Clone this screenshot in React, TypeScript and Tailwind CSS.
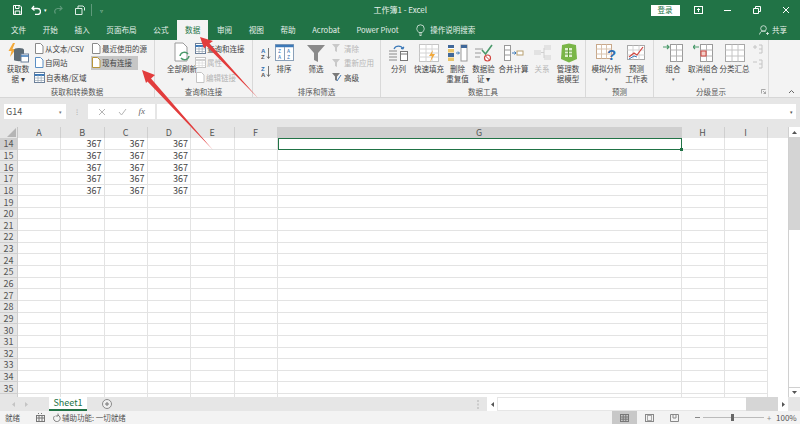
import type { ReactNode } from 'react';

const FONT = { fontFamily: '"Noto Sans CJK SC", "Liberation Sans", sans-serif' };

const COLUMNS = ['A', 'B', 'C', 'D', 'E', 'F', 'G', 'H', 'I'];
const TABS = ['文件', '开始', '插入', '页面布局', '公式', '数据', '审阅', '视图', '帮助', 'Acrobat', 'Power Pivot'];
const ROWS = Array.from({ length: 23 }, (_, i) => i + 14);
const LAST_ROW = 35;
const COL_TEMPLATE = 'grid-cols-[18px_43px_43.5px_43px_43.5px_43.5px_43px_404px_43px_43px_1fr]';

function Icon({ w = 20, h = 20, children }: { w?: number; h?: number; children: ReactNode }) {
  return (
    <svg width={w} height={h} viewBox={`0 0 ${w} ${h}`} fill="none" className="shrink-0">
      {children}
    </svg>
  );
}

function PageIcon({ stroke = '#8a8a8a' }: { stroke?: string }) {
  return (
    <Icon w={10} h={11}>
      <path d="M1.5.5h5l2.500 2.500v7.500h-7.500z" fill="#fff" stroke={stroke} />
    </Icon>
  );
}

function TableIcon({ muted }: { muted?: boolean }) {
  return (
    <Icon w={11} h={11}>
      <rect x=".5" y=".5" width="10" height="10" fill="#fff" stroke={muted ? '#c4c4c4' : '#6b7f99'} />
      <path d="M.5 3h10" stroke={muted ? '#d0d0d0' : '#3c79b8'} strokeWidth="2" />
      <path d="M.5 6h10M.5 8.500h10M4 3v7.500M7.200 3v7.500" stroke={muted ? '#dadada' : '#9aa7b5'} strokeWidth=".7" />
    </Icon>
  );
}

function Funnel({ fill }: { fill: string }) {
  return (
    <Icon w={12} h={10}>
      <path d="M1 1h8L6 4.500V9L4 8V4.500z" fill={fill} />
    </Icon>
  );
}

function SortIcon({ top, bottom }: { top: string; bottom: string }) {
  return (
    <Icon w={10} h={13}>
      <text x="0" y="5.500" fontSize="6" fontWeight="700" fill="#2f6fb0" fontFamily="Liberation Sans">{top}</text>
      <text x="0" y="12" fontSize="6" fontWeight="700" fill="#555" fontFamily="Liberation Sans">{bottom}</text>
      <path d="M7.500 1v10M6 9.500l1.500 2 1.500-2" stroke="#555" strokeWidth=".8" />
    </Icon>
  );
}

function SmallRow({ icon, label, disabled, active, className = '' }: { icon: ReactNode; label: string; disabled?: boolean; active?: boolean; className?: string }) {
  return (
    <div className={`flex h-[14.5px] items-center gap-[1px] whitespace-nowrap ${disabled ? 'text-[#b5b5b5]' : 'text-[#444]'} ${active ? 'bg-[#c6c6c6]' : ''} ${className}`}>
      {icon}
      <span>{label}</span>
    </div>
  );
}

function BigButton({ icon, lines, width, chevron }: { icon: ReactNode; lines: string[]; width: string; chevron?: boolean }) {
  return (
    <div className={`flex shrink-0 flex-col items-center text-[#444] ${width}`}>
      <div className="flex h-[23px] items-center justify-center">{icon}</div>
      {lines.map((line) => (
        <div key={line} className="h-[10px] whitespace-nowrap text-center leading-[10px]">
          {line}
        </div>
      ))}
      {chevron && <div className="h-[10px] text-[5px] leading-[10px] text-[#666]">▾</div>}
    </div>
  );
}

function Group({ label, width, children }: { label: string; width: string; children: ReactNode }) {
  return (
    <div className={`relative flex h-full shrink-0 flex-col border-r border-[#d9d9d9] ${width}`}>
      <div className="flex h-[47px] overflow-hidden pt-[1px]">{children}</div>
      <div className="text-center leading-[10px] text-[#555]">{label}</div>
    </div>
  );
}

function TitleBar() {
  return (
    <div className="flex h-[20px] items-center bg-[#217346] text-white">
      <div className="flex w-[112px] items-center pl-[13px]">
        <Icon w={9} h={10}>
          <path d="M.5.500h6.500l1.500 1.500v7.500h-8z" stroke="#fff" />
          <path d="M2.500 1v2.500h3.500V1M2.200 9.500V6h4.600v3.500" stroke="#fff" />
        </Icon>
        <span className="ml-[9px]">
          <Icon w={10} h={10}>
            <path d="M3 1 1 3.500 3.500 5.500M1.500 3.500h5a3 3 0 0 1 0 6H4" stroke="#fff" strokeWidth="1.300" />
          </Icon>
        </span>
        <span className="ml-[3px] text-[5px]">▾</span>
        <span className="ml-[7px]">
          <Icon w={9} h={10}>
            <path d="M6 1l2 2.500L5.500 5.500M7.500 3.500h-4a3 3 0 0 0-2 5" stroke="#5f9a7b" strokeWidth="1.200" />
          </Icon>
        </span>
        <span className="ml-[12px]">
          <Icon w={10} h={10}>
            <path d="M.5 3.500h6.500v6H.5zM3 3.500V1h5l1.500 1.500v3" stroke="#dfeee6" />
          </Icon>
        </span>
        <span className="ml-[6px] h-[12px] w-px bg-[#5f9a7b]" />
        <span className="ml-[8px] text-[6px] text-[#a8cbb8]">▿</span>
      </div>
      <div className="flex-1 pl-[38px] text-center text-[8px] text-[#e8f1ec]">工作簿1 - Excel</div>
      <div className="flex h-[11px] w-[29px] items-center justify-center bg-white text-[7.500px] text-[#217346]">登录</div>
      <div className="ml-[4.500px] flex w-[29px] justify-center">
        <Icon w={9} h={8}>
          <rect x=".5" y=".5" width="8" height="7" stroke="#fff" />
          <path d="M4.500 6V2.500M3 4l1.500-1.500L6 4" stroke="#fff" />
        </Icon>
      </div>
      <div className="flex w-[29px] justify-center">
        <span className="h-px w-[7px] bg-white" />
      </div>
      <div className="flex w-[29px] justify-center">
        <Icon w={8} h={8}>
          <path d="M.5 2.500h5v5h-5zM2.500 2.500v-2h5v5h-2" stroke="#fff" />
        </Icon>
      </div>
      <div className="flex w-[29px] justify-center">
        <Icon w={8} h={8}>
          <path d="m1 1 6 6M7 1 1 7" stroke="#fff" />
        </Icon>
      </div>
    </div>
  );
}

function TabBar() {
  return (
    <div className="flex h-[20px] items-end bg-[#217346] pl-[3px] text-[7.5px] text-[#e6f0ea]">
      {TABS.map((tab) => (
        <div
          key={tab}
          className={`mr-[0.6px] flex h-[20px] items-center px-2 text-[7.6px] ${tab === '数据' ? 'bg-[#f3f3f3] text-[#217346]' : ''}`}
        >
          {tab}
        </div>
      ))}
      <div className="ml-[9px] flex h-[20px] items-center gap-[5px]">
        <Icon w={9} h={12}>
          <path d="M2.800 8.500C1.500 7 .8 6 .8 4.500a3.700 3.700 0 0 1 7.400 0C8.200 6 7.500 7 6.200 8.500zM3 10h3M3.500 11.500h2" stroke="#e6f0ea" strokeWidth=".8" />
        </Icon>
        <span>操作说明搜索</span>
      </div>
      <div className="ml-auto mr-[13px] flex h-[20px] items-center gap-[3px]">
        <Icon w={10} h={10}>
          <circle cx="4.500" cy="3.500" r="2.800" stroke="#e6f0ea" strokeWidth=".8" />
          <path d="M.5 9.500a4 4 0 0 1 6-3M7 8.500h3M8.500 7v3" stroke="#e6f0ea" strokeWidth=".8" />
        </Icon>
        <span>共享</span>
      </div>
    </div>
  );
}

function Ribbon() {
  return (
    <div className="flex h-[58px] border-b border-[#d6d6d6] bg-[#f3f3f3] text-[7.5px]">
      <Group label="获取和转换数据" width="w-[155px]">
        <BigButton
          width="w-[32px] ml-[2px]"
          lines={['获取数', '据 ▾']}
          icon={
            <Icon w={22} h={22}>
              <path d="M6 1 1.500 9h3L3 15l6-8H5.500L8 1z" fill="#f2a93b" />
              <ellipse cx="12" cy="8" rx="5" ry="2" fill="#5d6b75" />
              <path d="M7 8v10c0 1.500 10 1.500 10 0V8z" fill="#5d6b75" />
              <rect x="14" y="12" width="7.500" height="8" fill="#fff" stroke="#6b7f99" />
              <path d="M14 14h7.500" stroke="#3c79b8" strokeWidth="1.500" />
            </Icon>
          }
        />
        <div className="flex w-[57px] shrink-0 flex-col">
          <SmallRow icon={<PageIcon />} label="从文本/CSV" />
          <SmallRow icon={<PageIcon stroke="#5b8fc4" />} label="自网站" />
          <SmallRow icon={<TableIcon />} label="自表格/区域" />
        </div>
        <div className="flex w-[60px] shrink-0 flex-col">
          <SmallRow icon={<PageIcon />} label="最近使用的源" />
          <SmallRow icon={<PageIcon stroke="#b8963a" />} label="现有连接" active className="w-[47px]" />
        </div>
      </Group>

      <Group label="查询和连接" width="w-[98px]">
        <BigButton
          width="w-[30px] ml-[12px]"
          lines={['全部刷新']}
          chevron
          icon={
            <Icon w={20} h={22}>
              <path d="M3 1h8l4 4v14H3z" fill="#fff" stroke="#9a9a9a" />
              <path d="M8 14a4.500 4.500 0 0 1 8-2M17 14a4.500 4.500 0 0 1-8 2" stroke="#4b9a6b" strokeWidth="1.500" />
            </Icon>
          }
        />
        <div className="ml-[-2px] flex w-[50px] shrink-0 flex-col">
          <SmallRow icon={<TableIcon />} label="查询和连接" />
          <SmallRow icon={<TableIcon muted />} label="属性" disabled />
          <SmallRow icon={<PageIcon stroke="#c4c4c4" />} label="编辑链接" disabled />
        </div>
      </Group>

      <Group label="排序和筛选" width="w-[128px]">
        <div className="ml-[8px] flex w-[12px] shrink-0 flex-col gap-[5px] pt-[6px]">
          <SortIcon top="A" bottom="Z" />
          <SortIcon top="Z" bottom="A" />
        </div>
        <BigButton
          width="w-[22px]"
          lines={['排序']}
          icon={
            <Icon w={19} h={17}>
              <rect x=".5" y=".5" width="18" height="16" fill="#fff" stroke="#8aa0b8" />
              <path d="M.5 2h18" stroke="#3c79b8" strokeWidth="2.500" />
              <path d="M9.500 3v13" stroke="#8aa0b8" />
              <text x="3" y="9" fontSize="5" fill="#2f6fb0">Z</text>
              <text x="12" y="9" fontSize="5" fill="#2f6fb0">A</text>
              <text x="3" y="15" fontSize="5" fill="#2f6fb0">A</text>
              <text x="12" y="15" fontSize="5" fill="#2f6fb0">Z</text>
            </Icon>
          }
        />
        <BigButton
          width="w-[30px] ml-[6px]"
          lines={['筛选']}
          icon={
            <Icon w={20} h={20}>
              <path d="M1 2h18l-7 8v9l-4-2v-7z" fill="#8a8a8a" />
            </Icon>
          }
        />
        <div className="flex w-[45px] shrink-0 flex-col">
          <SmallRow disabled label="清除" icon={<Funnel fill="#c9c9c9" />} />
          <SmallRow disabled label="重新应用" icon={<Funnel fill="#c9c9c9" />} />
          <SmallRow label="高级" icon={<Icon w={12} h={10}><path d="M1 1h8L6 4.500V9L4 8V4.500z" fill="#7a7a7a" /><path d="m6 9 4-6" stroke="#3c79b8" /></Icon>} />
        </div>
      </Group>

      <Group label="数据工具" width="w-[205px]">
        <BigButton
          width="w-[29px] ml-[3px]"
          lines={['分列']}
          icon={
            <Icon w={21} h={20}>
              <path d="M1 8h8M1 11h8M1 14h8M1 17h8" stroke="#8a8a8a" />
              <rect x="12.500" y="8.500" width="7" height="9" fill="#fff" stroke="#777" />
              <path d="M12.500 11h7" stroke="#777" />
              <path d="M6 6a5 5 0 0 1 9 0M15 6l-2-.5M15 6l.8-2.200" stroke="#3c79b8" strokeWidth="1.200" />
            </Icon>
          }
        />
        <BigButton
          width="w-[32px]"
          lines={['快速填充']}
          icon={
            <Icon w={20} h={20}>
              <rect x=".5" y="1.500" width="19" height="17" fill="#fff" stroke="#c4c4c4" />
              <path d="M.5 6h19M.5 10h19M.5 14h19M7 1.500v17M13 1.500v17" stroke="#d4d4d4" />
              <path d="M14 7l-4 6h3l-2 6 5-8h-3z" fill="#f2a93b" />
            </Icon>
          }
        />
        <BigButton
          width="w-[25px]"
          lines={['删除', '重复值']}
          icon={
            <Icon w={21} h={18}>
              <rect x="1" y="1" width="6" height="16" fill="#e9c46a" />
              <path d="M1 4.500h6M1 9h6M1 13h6" stroke="#fff" />
              <rect x="1" y="1" width="6" height="3" fill="#40689a" />
              <rect x="1" y="9" width="6" height="4" fill="#40689a" />
              <rect x="14" y="1" width="6" height="16" fill="#fff" stroke="#999" />
              <rect x="14" y="1" width="6" height="3" fill="#40689a" />
              <path d="M9 9h3M11 7.500 12.500 9 11 10.500" stroke="#3c79b8" />
            </Icon>
          }
        />
        <BigButton
          width="w-[27px]"
          lines={['数据验', '证 ▾']}
          icon={
            <Icon w={20} h={20}>
              <path d="M1 6h8M1 10h6M1 14h5" stroke="#9a9a9a" />
              <path d="m8 7 3.500 4L18 2" stroke="#4b9a6b" strokeWidth="1.600" />
              <circle cx="13.500" cy="15" r="3" fill="#fff" stroke="#d0453f" strokeWidth="1.200" />
              <path d="m11.500 13 4 4" stroke="#d0453f" />
            </Icon>
          }
        />
        <BigButton
          width="w-[33px]"
          lines={['合并计算']}
          icon={
            <Icon w={21} h={18}>
              <rect x="1.500" y="1.500" width="6" height="15" fill="#fff" stroke="#999" />
              <path d="M1.500 6h6M1.500 11h6" stroke="#999" />
              <rect x="14" y="7" width="6" height="4" fill="#fff" stroke="#b8a070" />
              <path d="M9 9h4M11.500 7.500 13 9l-1.500 1.500" stroke="#3c79b8" />
            </Icon>
          }
        />
        <div className="w-[24px] shrink-0 text-[#b5b5b5]">
          <div className="flex h-[23px] items-center justify-center">
            <Icon w={19} h={18}>
              <rect x="1" y="6" width="7" height="5" fill="#e2e2e2" />
              <rect x="11" y="1" width="7" height="5" fill="#e2e2e2" />
              <rect x="11" y="11" width="7" height="5" fill="#e2e2e2" />
              <path d="M8 8.500h3M11 4v10" stroke="#cfcfcf" />
            </Icon>
          </div>
          <div className="h-[10px] text-center leading-[10px]">关系</div>
        </div>
        <BigButton
          width="w-[28px]"
          lines={['管理数', '据模型']}
          icon={
            <Icon w={19} h={20}>
              <path d="M3 2 10 .5 17 2l1 14-8 3.500L2 16z" fill="#7ab648" />
              <rect x="6" y="5" width="7" height="9" fill="#dff0cf" />
              <path d="M6 8h7M6 11h7M9.500 5v9" stroke="#5d9a32" />
            </Icon>
          }
        />
      </Group>

      <Group label="预测" width="w-[68px]">
        <BigButton
          width="w-[33px] ml-[4px]"
          lines={['模拟分析']}
          chevron
          icon={
            <Icon w={21} h={19}>
              <rect x=".5" y="1.500" width="15" height="14" fill="#fff" stroke="#c8a88a" />
              <path d="M.5 6h15M.5 11h15M5.500 1.500v14M10.500 1.500v14" stroke="#d9c3ae" />
              <text x="11" y="17" fontSize="15" fontWeight="700" fill="#2f6fb0" fontFamily="Liberation Sans">?</text>
            </Icon>
          }
        />
        <BigButton
          width="w-[27px]"
          lines={['预测', '工作表']}
          icon={
            <Icon w={19} h={18}>
              <rect x=".5" y="1.500" width="17" height="14" fill="#fff" stroke="#a8a8a8" />
              <path d="M.5 6h17M.5 11h17M6 1.500v14M12 1.500v14" stroke="#d4d4d4" />
              <path d="m2 13 5-4 3 2 6-8" stroke="#d0453f" strokeWidth="1.200" />
              <path d="m2 15 5-3 3 1" stroke="#3c79b8" />
            </Icon>
          }
        />
      </Group>

      <Group label="分级显示" width="w-[115px]">
        <BigButton
          width="w-[30px] ml-[4px]"
          lines={['组合']}
          chevron
          icon={
            <Icon w={20} h={18}>
              <rect x="7.500" y=".5" width="12" height="17" fill="#fff" stroke="#9a9a9a" />
              <path d="M7.500 6h12M7.500 12h12M13.500.5v17" stroke="#b5b5b5" />
              <path d="M0 3h6M4 1l2 2-2 2" stroke="#4b9a6b" strokeWidth="1.200" />
            </Icon>
          }
        />
        <BigButton
          width="w-[30px]"
          lines={['取消组合']}
          chevron
          icon={
            <Icon w={20} h={18}>
              <rect x="7.500" y=".5" width="12" height="17" fill="#fff" stroke="#9a9a9a" />
              <path d="M7.500 6h12M7.500 12h12M13.500.5v17" stroke="#b5b5b5" />
              <path d="M6 3H0M2 1 0 3l2 2" stroke="#4b9a6b" strokeWidth="1.200" />
              <rect x="8" y="7" width="5" height="5" fill="#f3d0c8" stroke="#d0453f" />
            </Icon>
          }
        />
        <BigButton
          width="w-[33px]"
          lines={['分类汇总']}
          icon={
            <Icon w={20} h={18}>
              <rect x=".5" y=".5" width="19" height="17" fill="#fff" stroke="#a8a8a8" />
              <path d="M.5 6h19M.5 12h19M7 .5v17M13 .5v17" stroke="#c4c4c4" />
            </Icon>
          }
        />
        <div className="ml-[2px] flex w-[12px] shrink-0 flex-col gap-[5px] pt-[3px]">
          <Icon w={10} h={10}>
            <path d="M0 3h4M2 1v4M6 1h3v8H6M6 5h3" stroke="#c4c4c4" />
          </Icon>
          <Icon w={10} h={10}>
            <path d="M0 3h4M6 1h3v8H6M6 5h3" stroke="#c4c4c4" />
          </Icon>
        </div>
        <div className="absolute bottom-[3px] right-[2px]">
          <Icon w={5} h={5}>
            <path d="M.5 4.500v-4h4M2 2l2.500 2.500M4.500 2.500v2h-2" stroke="#888" strokeWidth=".7" />
          </Icon>
        </div>
      </Group>

      <div className="flex flex-1 items-end justify-end pb-[3px] pr-[5px]">
        <Icon w={7} h={5}>
          <path d="m1 4 2.500-2.500L6 4" stroke="#666" />
        </Icon>
      </div>
    </div>
  );
}

function FormulaBar() {
  return (
    <div className="flex h-[29px] items-start gap-[2px] bg-[#e6e6e6] pl-[4px] pt-[6px] text-[#555]">
      <div className="flex h-[15px] w-[62px] items-center justify-between bg-white px-[2px] text-[9px]">
        <span>G14</span>
        <span className="pr-[2px] text-[5px] text-[#777]">▾</span>
      </div>
      <div className="flex h-[15px] w-[18px] items-center justify-center text-[8px] text-[#aaa]">⁝</div>
      <div className="flex h-[15px] w-[67px] items-center justify-around bg-white px-[4px]">
        <Icon w={8} h={8}>
          <path d="m1 1 6 6M7 1 1 7" stroke="#b5b5b5" />
        </Icon>
        <Icon w={9} h={8}>
          <path d="m1 4 2.500 3L8 1" stroke="#b5b5b5" />
        </Icon>
        <span className="font-['Liberation_Serif',serif] text-[9px] italic text-[#666]">fx</span>
      </div>
      <div className="flex h-[15px] flex-1 items-center justify-end bg-white pr-[3px]">
        <span className="text-[5px] text-[#555]">▾</span>
      </div>
      <div className="w-[2px]" />
    </div>
  );
}

function SheetGrid() {
  return (
    <div className="min-w-0 flex-1 overflow-hidden bg-white text-[9px]">
      <div className={`grid h-[11px] ${COL_TEMPLATE} bg-[#e6e6e6] text-[#555]`}>
        <div className="flex items-end justify-end border-r border-[#c6c6c6] pb-[1px] pr-[1px]">
          <div className="h-0 w-0 border-b-[9px] border-l-[9px] border-b-[#b5b5b5] border-l-transparent" />
        </div>
        {COLUMNS.map((col) => (
          <div
            key={col}
            className={`flex items-center justify-center border-r border-[#cfcfcf] leading-none ${col === 'G' ? 'bg-[#cfcfcf]' : ''}`}
          >
            {col}
          </div>
        ))}
        <div className="bg-[#e6e6e6]" />
      </div>
      {ROWS.map((row) => (
        <div key={row} className={`grid h-[11.65px] ${COL_TEMPLATE} text-[#444]`}>
          <div
            className={`flex items-center justify-center border-b border-r border-[#cfcfcf] pt-px leading-none text-[#555] ${row === 14 ? 'bg-[#cfcfcf]' : 'bg-[#e6e6e6]'}`}
          >
            {row <= LAST_ROW && row}
          </div>
          {COLUMNS.map((col) => {
            const selected = row === 14 && col === 'G';
            const hasValue = row <= 18 && (col === 'B' || col === 'C' || col === 'D');
            return (
              <div
                key={col}
                className={
                  selected
                    ? 'relative border border-[#217346]'
                    : 'flex items-center justify-end border-b border-r border-[#e3e3e3] pr-[2px] pt-px leading-none'
                }
              >
                {hasValue && '367'}
                {selected && <div className="absolute bottom-[-2px] right-[-2px] h-[3px] w-[3px] bg-[#217346]" />}
              </div>
            );
          })}
          <div />
        </div>
      ))}
    </div>
  );
}

function VerticalScroll() {
  return (
    <div className="flex w-[12px] shrink-0 flex-col border-l border-[#d0d0d0] bg-[#e6e6e6]">
      <div className="flex h-[10px] items-center justify-center bg-white text-[5px] text-[#555]">
        <Icon w={5} h={3}>
          <path d="M0 3 2.500 0 5 3z" fill="#555" />
        </Icon>
      </div>
      <div className="h-[93px] bg-[#d4d4d4]" />
      <div className="flex-1 bg-white" />
      <div className="flex h-[10px] items-center justify-center border-t border-[#d0d0d0] bg-white">
        <Icon w={5} h={3}>
          <path d="M0 0h5L2.500 3z" fill="#555" />
        </Icon>
      </div>
    </div>
  );
}

function Triangle({ dir, fill }: { dir: 'left' | 'right'; fill: string }) {
  return (
    <Icon w={3} h={5}>
      <path d={dir === 'left' ? 'M3 0v5L0 2.500z' : 'M0 0v5l3-2.500z'} fill={fill} />
    </Icon>
  );
}

function SheetTabs() {
  return (
    <div className="flex h-[14px] items-stretch bg-[#e6e6e6] text-[9px]">
      <div className="flex w-[49px] items-center gap-[10px] pl-[12px]">
        <Triangle dir="left" fill="#c4c4c4" />
        <Triangle dir="right" fill="#c4c4c4" />
      </div>
      <div className="flex w-[38px] items-center justify-center border-b-2 border-[#217346] bg-white text-[#217346]">Sheet1</div>
      <div className="ml-[15px] flex items-center">
        <Icon w={10} h={10}>
          <circle cx="5" cy="5" r="4.500" stroke="#8a8a8a" fill="#efefef" />
          <path d="M3 5h4M5 3v4" stroke="#777" />
        </Icon>
      </div>
      <div className="flex flex-1 items-center justify-end pr-[8px]">
        <Icon w={2} h={9}>
          <path d="M1 0v2M1 3.500v2M1 7v2" stroke="#b0b0b0" />
        </Icon>
      </div>
      <div className="flex w-[10px] items-center justify-center bg-white">
        <Triangle dir="left" fill="#555" />
      </div>
      <div className="my-[1px] ml-px w-[248px] bg-white" />
      <div className="w-[32px] bg-[#d6d6d6]" />
      <div className="flex w-[10px] items-center justify-center bg-white">
        <Triangle dir="right" fill="#555" />
      </div>
      <div className="w-[12px]" />
    </div>
  );
}

function StatusBar() {
  return (
    <div className="flex h-[13px] items-center bg-[#f3f3f3] pl-[5px] text-[7.5px] text-[#555]">
      <span>就绪</span>
      <span className="ml-[16px]">
        <Icon w={9} h={9}>
          <rect x=".5" y="2.500" width="8" height="6" stroke="#777" />
          <path d="M.5 5h8M3 2.500v6M6 2.500v6M2 .5h1M5 .5h1" stroke="#777" />
        </Icon>
      </span>
      <span className="ml-[7px] flex items-center gap-[1px]">
        <Icon w={9} h={9}>
          <path d="M2.500 3A3.300 3.300 0 1 0 6 2.200M6 .5v2.500H3.500" stroke="#666" strokeWidth=".8" />
        </Icon>
        辅助功能: 一切就绪
      </span>
      <div className="flex-1" />
      <div className="flex h-[13px] w-[25px] items-center justify-center bg-[#c8c8c8]">
        <Icon w={9} h={8}>
          <rect x=".5" y=".5" width="8" height="7" stroke="#777" />
          <path d="M.5 3h8M.5 5.200h8M3.200.5v7M5.800.5v7" stroke="#777" />
        </Icon>
      </div>
      <div className="flex w-[25px] justify-center">
        <Icon w={9} h={8}>
          <rect x=".5" y=".5" width="8" height="7" stroke="#888" />
          <rect x="2.500" y="1.500" width="4" height="5" stroke="#aaa" />
        </Icon>
      </div>
      <div className="flex w-[25px] justify-center">
        <Icon w={9} h={8}>
          <path d="M.5.5h8v7h-8zM3 .5v3.500h3V.5" stroke="#888" />
        </Icon>
      </div>
      <div className="ml-[8px] flex w-[80px] items-center gap-[3px] text-[#888]">
        <span className="h-px w-[5px] bg-[#888]" />
        <div className="relative h-px w-[61px] bg-[#bbb]">
          <span className="absolute left-[28px] top-[-3px] h-[7px] w-[3px] bg-[#666]" />
        </div>
        <span>+</span>
      </div>
      <span className="ml-[1px] w-[24px] text-[8px] text-[#555]">100%</span>
    </div>
  );
}

export default function App() {
  return (
    <div className="relative h-[424px] w-[800px] overflow-hidden bg-white" style={FONT}>
      <TitleBar />
      <TabBar />
      <Ribbon />
      <FormulaBar />
      <div className="flex h-[270px]">
        <SheetGrid />
        <VerticalScroll />
      </div>
      <SheetTabs />
      <StatusBar />
      {/* red annotation arrows over the window */}
      <svg className="pointer-events-none absolute left-0 top-0" width="800" height="424" viewBox="0 0 800 424">
        <path d="M200 37 213 41 209.500 43.500 258 98 206.500 46 204 48.500z" fill="#e23c3c" />
        <path d="M142 70 155 75 151 78.500 213 150 147.500 81.500 146 83z" fill="#e23c3c" />
      </svg>
    </div>
  );
}
